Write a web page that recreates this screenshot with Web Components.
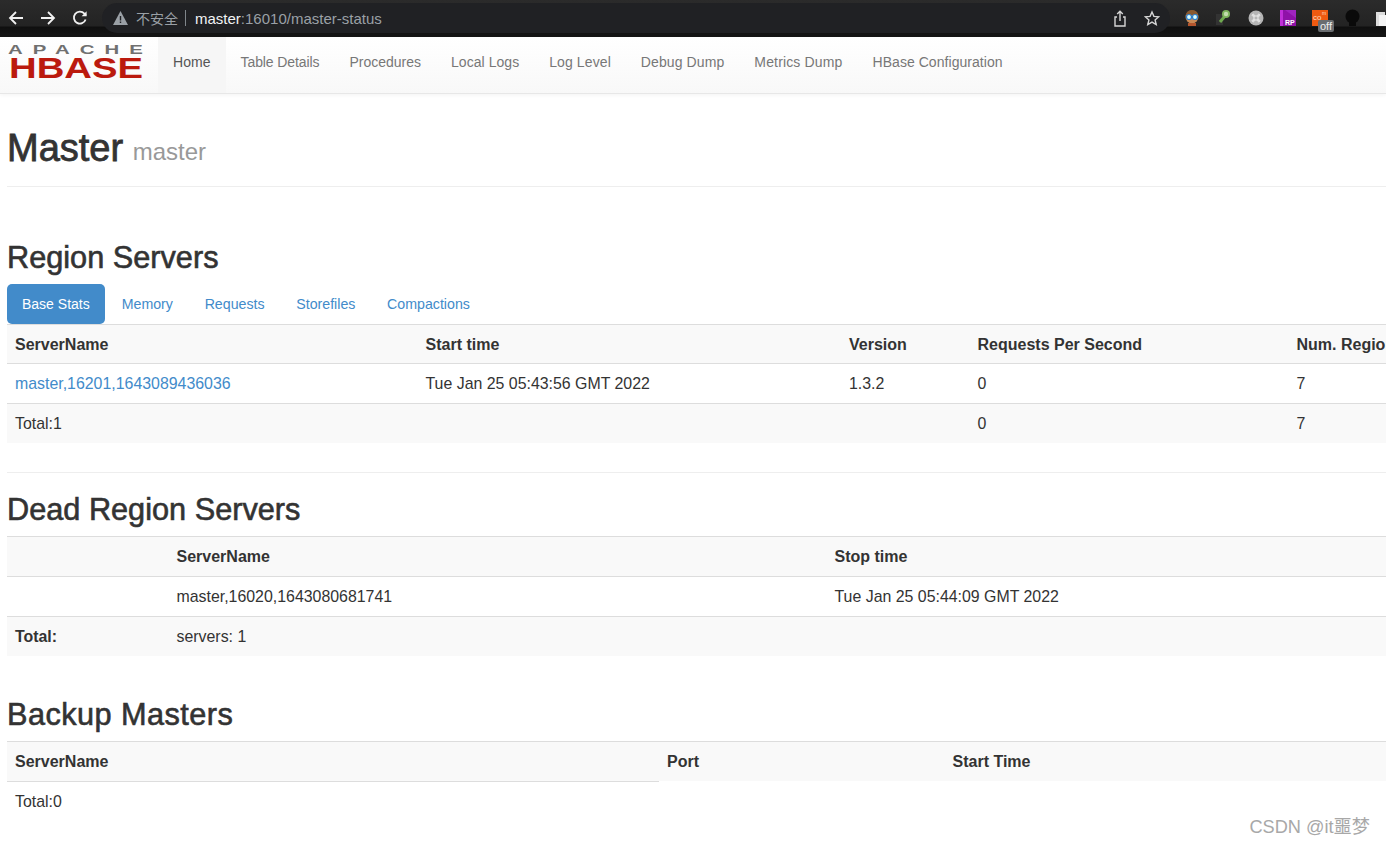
<!DOCTYPE html>
<html>
<head>
<meta charset="utf-8">
<title>Master: master</title>
<style>
  html,body{margin:0;padding:0;background:#fff;overflow:hidden;height:846px}
  body{font:16px/1.43 "Liberation Sans",Arial,"Noto Sans CJK SC",sans-serif;color:#333}
</style>
</head>
<body>
<browser-bar url-host="master" url-path=":16010/master-status"></browser-bar>
<hbase-nav></hbase-nav>
<page-header>Master <small slot="sub">master</small></page-header>

<section-title style="--top:53px">Region Servers</section-title>
<nav-tabs></nav-tabs>
<data-table id="rs" style="--mt:0px;--hh:38px"></data-table>
<page-rule></page-rule>
<section-title style="--top:19px">Dead Region Servers</section-title>
<data-table id="dead" style="--mt:8px;--hh:39px"></data-table>
<section-title style="--top:41px;letter-spacing:.45px">Backup Masters</section-title>
<data-table id="backup" style="--mt:8px;--hh:39px"></data-table>
<water-mark>CSDN @it噩梦</water-mark>

<script>
class BrowserBar extends HTMLElement {
  constructor() {
    super();
    this.attachShadow({ mode: "open" });
  }
  connectedCallback() {
    const host = this.getAttribute("url-host");
    const path = this.getAttribute("url-path");
    this.shadowRoot.innerHTML = `
      <style>
        :host{display:flex;align-items:flex-start;height:37px;box-sizing:border-box;background:linear-gradient(#2b2b2b 0,#232323 26px,#0f0f0f 27px,#161616 37px);font:14px "Liberation Sans","Noto Sans CJK SC",sans-serif;position:relative}
        .nav{display:flex;width:102px;padding:10px 0 0 8px;box-sizing:border-box;gap:16px}
        .nav svg{width:16px;height:16px;fill:none;stroke:#f1f1f1;stroke-width:1.8}
        .box{width:1068px;height:30px;box-sizing:border-box;margin-top:3px;background:#202124;border-radius:15px;display:flex;align-items:center;padding-left:11px;color:#9aa0a6}
        .warn{width:15px;height:14px;margin-right:8px}
        .sep{width:1px;height:16px;background:#80868b;margin:0 9px 0 7px}
        .url{font-size:15px}
        .host{color:#f1f3f4}
        .end{margin-left:auto;display:flex;align-items:center;gap:16px;padding-right:10px}
        .end svg{width:16px;height:17px;fill:none;stroke:#d6d6d6;stroke-width:1.4}
        .ext{position:relative;flex:1;height:37px}
        .ext > *{position:absolute}
        .off{left:148px;top:20px;background:#6a6d70;color:#eee;font-size:11px;line-height:12px;padding:0 2px;border-radius:2px}
      </style>
      <div class="nav">
        <svg viewBox="0 0 16 16"><path d="M15 8H2M8 2 2 8l6 6"/></svg>
        <svg viewBox="0 0 16 16"><path d="M1 8h13M8 2l6 6-6 6"/></svg>
        <svg viewBox="0 0 16 16"><path d="M13.600 9.500A6 6 0 1 1 12.400 3.600L14 5.500"/><path d="M14.600 1.200v5h-5" fill="#f1f1f1" stroke="none"/></svg>
      </div>
      <div class="box">
        <svg class="warn" viewBox="0 0 15 14"><path d="M7.500 0 15 14H0z" fill="#9aa0a6"/><path d="M6.800 5h1.400v4.600H6.800zM6.800 10.600h1.400V12H6.800z" fill="#202124"/></svg>
        <span>不安全</span><span class="sep"></span><span class="url"><span class="host">${host}</span>${path}</span>
        <span class="end">
          <svg viewBox="0 0 16 17"><path d="M8 11V1.500M5.200 4 8 1.200 10.800 4M5 7H3v9h10V7h-2"/></svg>
          <svg viewBox="0 0 16 17"><path d="M8 2l1.900 4.400 4.800.4-3.600 3.100 1.100 4.700L8 12.100l-4.200 2.500 1.100-4.700L1.300 6.800l4.800-.4z"/></svg>
        </span>
      </div>
      <div class="ext">
        <svg style="left:14px;top:10px" width="16" height="16" viewBox="0 0 16 16"><circle cx="8" cy="7" r="6.500" fill="#c98a56"/><path d="M2 5a6 5 0 0 1 12 0z" fill="#8a5a30"/><circle cx="5" cy="7" r="2.500" fill="#dff" stroke="#2a7fd0" stroke-width="1.200"/><circle cx="11" cy="7" r="2.500" fill="#dff" stroke="#2a7fd0" stroke-width="1.200"/><path d="M4 13h8v3H4z" fill="#b5562e"/></svg>
        <svg style="left:45px;top:9px" width="18" height="18" viewBox="0 0 18 18"><path d="M1 5h7v11H1z" fill="#333"/><path d="M5 13 10 7" stroke="#6fa84f" stroke-width="3"/><circle cx="11" cy="5" r="4" fill="#7db35d"/><circle cx="11" cy="5" r="2.200" fill="#c3dcae"/></svg>
        <svg style="left:78px;top:10px" width="16" height="16" viewBox="0 0 16 16"><circle cx="8" cy="8" r="7.500" fill="#b5b5b5"/><path d="M6 6h4v4H6zM6 6H4.500a1 1 0 1 1 1.500-1.500zM10 6h1.500a1 1 0 1 0-1.500-1.500zM6 10H4.500a1 1 0 1 0 1.500 1.500zM10 10h1.500a1 1 0 1 1-1.500 1.500z" fill="none" stroke="#eee" stroke-width="1"/></svg>
        <svg style="left:110px;top:10px" width="16" height="16" viewBox="0 0 16 16"><path d="M0 0h16v16H0z" fill="#8f12a8"/><path d="M0 0h3v16H0z" fill="#c030d8"/><path d="M5 0l11 8V0z" fill="#a024c0"/><text x="5" y="14.500" font-size="7" font-weight="bold" fill="#fff" font-family="Liberation Sans">RP</text></svg>
        <svg style="left:142px;top:10px" width="16" height="16" viewBox="0 0 16 16"><path d="M0 0h16v16H0z" fill="#ef5a11"/><text x="1" y="10" font-size="8" fill="#ffd9bd" font-family="Liberation Sans">co</text><text x="10" y="5" font-size="5" fill="#ffd9bd" font-family="Liberation Sans">m</text></svg>
        <span class="off">off</span>
        <svg style="left:174px;top:9px" width="17" height="17" viewBox="0 0 17 17"><circle cx="8.500" cy="7.500" r="7" fill="#0a0a0a"/><path d="M5 13h7v4H5z" fill="#0a0a0a"/></svg>
        <svg style="left:206px;top:10px" width="12" height="16" viewBox="0 0 12 16"><path d="M0 2h9v14H0z" fill="#ddd"/><path d="M3 5h9v11H3z" fill="#f4f4f4"/></svg>
      </div>`;
  }
}
customElements.define("browser-bar", BrowserBar);

class HbaseNav extends HTMLElement {
  constructor() {
    super();
    this.attachShadow({ mode: "open" });
  }
  connectedCallback() {
    const items = [["Home",.05],["Table Details",-.1],["Procedures",0],["Local Logs",.05],["Log Level",.1],["Debug Dump",.1],["Metrics Dump",.15],["HBase Configuration",.05]];
    this.shadowRoot.innerHTML = `
      <style>
        :host{display:flex;height:57px;box-sizing:border-box;background:linear-gradient(#fff,#f8f8f8);border-bottom:1px solid #e7e7e7;box-shadow:0 1px 4px rgba(0,0,0,.05);font:14px "Liberation Sans",sans-serif;position:relative}
        .logo{width:158px;flex:none;display:flex;flex-direction:column;padding:7px 0 0 8px;box-sizing:border-box;gap:1px}
        .logo svg{display:block;overflow:visible}
        a{display:block;padding:0 15px;line-height:50px;color:#777;height:56px;box-sizing:border-box}
        a.on{color:#555;background:#f6f6f6}
      </style>
      <div class="logo">
        <svg width="135" height="10" viewBox="0 0 135 10"><text transform="translate(0,10) scale(1.7,1)" font-family="Liberation Sans" font-weight="bold" font-size="12" fill="#707070" textLength="79.400" lengthAdjust="spacing">APACHE</text></svg>
        <svg width="135" height="23" viewBox="0 0 135 23"><text x="1" y="22.500" font-family="Liberation Sans" font-weight="bold" font-size="29" fill="#bb1a0e" textLength="134" lengthAdjust="spacingAndGlyphs">HBASE</text></svg>
      </div>
      ${items.map(([t, ls], i) => `<a class="${i ? "" : "on"}" style="letter-spacing:${ls}px">${t}</a>`).join("")}`;
  }
}
customElements.define("hbase-nav", HbaseNav);

class PageHeader extends HTMLElement {
  constructor() {
    super();
    this.attachShadow({ mode: "open" });
  }
  connectedCallback() {
    this.shadowRoot.innerHTML = `
      <style>
        :host{display:block;margin:0 0 0 7px;height:93px;box-sizing:border-box;border-bottom:1px solid #eee;padding-top:32px;font:38px/44px "Liberation Sans",sans-serif;color:#333;-webkit-text-stroke:.8px #333}
        ::slotted(small){font-size:24px;color:#999;-webkit-text-stroke:0;margin-left:-1px;vertical-align:1px}
      </style>
      <slot></slot><slot name="sub"></slot>`;
  }
}
customElements.define("page-header", PageHeader);

class SectionTitle extends HTMLElement {
  constructor() {
    super();
    this.attachShadow({ mode: "open" }).innerHTML = `
      <style>
        :host{display:block;margin:var(--top) 0 0 7px;font:30.7px/36px "Liberation Sans",sans-serif;-webkit-text-stroke:.6px #333;color:#333}
      </style>
      <slot></slot>`;
  }
}
customElements.define("section-title", SectionTitle);

class NavTabs extends HTMLElement {
  constructor() {
    super();
    this.attachShadow({ mode: "open" }).innerHTML = `
      <style>
        :host{display:flex;margin:8px 0 0 7px;font:14.2px/40px "Liberation Sans",sans-serif;gap:1.7px}
        a{color:#428bca;padding:0 15px;height:40px;border-radius:5px;white-space:nowrap}
        a.on{background:#428bca;color:#fff;width:68px;font-size:14px}
      </style>
      <a class="on">Base Stats</a><a>Memory</a><a>Requests</a><a>Storefiles</a><a>Compactions</a>`;
  }
}
customElements.define("nav-tabs", NavTabs);

class DataTable extends HTMLElement {
  constructor() {
    super();
    this.attachShadow({ mode: "open" });
  }
  // cols: column widths, rows: cell lists, first row is the header
  render({ cols, rows, stripe, partial }) {
    const width = cols.reduce((a, b) => a + b, 0);
    this.shadowRoot.innerHTML = `
      <style>
        :host{display:block;margin:var(--mt) 0 0 7px;font:15.9px/24px "Liberation Sans",sans-serif;color:#333}
        .grid{display:grid;grid-template-columns:${cols.map((c) => c + "px").join(" ")};width:${width}px;border-top:1px solid #ddd}
        .c{padding:8px 8px 7px;height:40px;box-sizing:border-box;white-space:nowrap;border-top:1px solid #ddd}
        .h{font-size:16px;font-weight:bold;height:var(--hh);border-top:0;background:#f9f9f9}
        .s{background:#f9f9f9}
        .n{border-top:0}
        b{font-weight:bold}
        a{color:#428bca}
      </style>
      <div class="grid">${rows
        .map((r, i) =>
          r
            .map((c, j) => {
              let cls = "c";
              if (i === 0) cls += " h";
              if (i > 0 && stripe.includes(i)) cls += " s";
              // the backup table only rules off its first column
              if (i > 0 && partial !== undefined && partial !== j) cls += " n";
              return `<div class="${cls}">${c}</div>`;
            })
            .join(""),
        )
        .join("")}</div>`;
  }
}
customElements.define("data-table", DataTable);

class PageRule extends HTMLElement {
  constructor() {
    super();
    this.attachShadow({ mode: "open" }).innerHTML = `
      <style>:host{display:block;margin:29px 0 0 7px;border-top:1px solid #eee}</style>`;
  }
}
customElements.define("page-rule", PageRule);

class WaterMark extends HTMLElement {
  constructor() {
    super();
    this.attachShadow({ mode: "open" }).innerHTML = `
      <style>:host{position:absolute;right:16px;top:815px;font:18.2px/24px "Liberation Sans","Noto Sans CJK SC",sans-serif;color:#a8a8a8}</style>
      <slot></slot>`;
  }
}
customElements.define("water-mark", WaterMark);

document.getElementById("rs").render({
  cols: [410.5, 423.5, 128.5, 319, 200],
  stripe: [2],
  rows: [
    ["ServerName", "Start time", "Version", "Requests Per Second", "Num. Regions"],
    ['<a>master,16201,1643089436036</a>', "Tue Jan 25 05:43:56 GMT 2022", "1.3.2", "0", "7"],
    ["Total:1", "", "", "0", "7"],
  ],
});
document.getElementById("dead").render({
  cols: [161.5, 658, 560],
  stripe: [2],
  rows: [
    ["", "ServerName", "Stop time"],
    ["", "master,16020,1643080681741", "Tue Jan 25 05:44:09 GMT 2022"],
    ["<b>Total:</b>", "servers: 1", ""],
  ],
});
document.getElementById("backup").render({
  cols: [652, 285.5, 441.5],
  stripe: [],
  partial: 0,
  rows: [
    ["ServerName", "Port", "Start Time"],
    ["Total:0", "", ""],
  ],
});
</script>
</body>
</html>
